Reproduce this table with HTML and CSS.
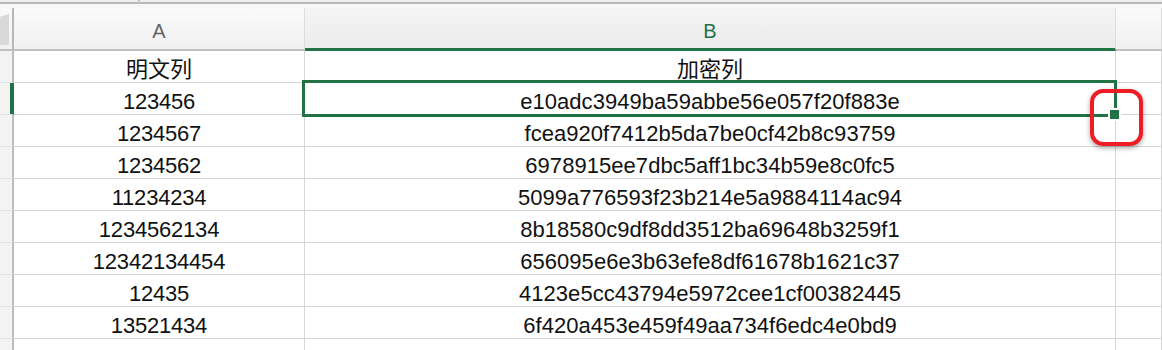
FILE: index.html
```html
<!DOCTYPE html>
<html lang="zh">
<head>
<meta charset="utf-8">
<title>Sheet</title>
<link rel="stylesheet" href="styles.css">
</head>
<body>
<div class="app">
  <div class="topbar"><span class="tb-sep"></span></div>
  <div class="sheet">
    <div class="cell corner"><span class="corner-tri"></span></div>
    <div class="cell colhead">A</div>
    <div class="cell colhead sel">B</div>
    <div class="cell colhead"></div>

    <div class="cell rowhead"></div>
    <div class="cell data cjk">明文列</div>
    <div class="cell data cjk">加密列</div>
    <div class="cell data"></div>

    <div class="cell rowhead selrow"></div>
    <div class="cell data">123456</div>
    <div class="cell data hex">e10adc3949ba59abbe56e057f20f883e</div>
    <div class="cell data"></div>

    <div class="cell rowhead"></div>
    <div class="cell data">1234567</div>
    <div class="cell data hex">fcea920f7412b5da7be0cf42b8c93759</div>
    <div class="cell data"></div>

    <div class="cell rowhead"></div>
    <div class="cell data">1234562</div>
    <div class="cell data hex">6978915ee7dbc5aff1bc34b59e8c0fc5</div>
    <div class="cell data"></div>

    <div class="cell rowhead"></div>
    <div class="cell data">11234234</div>
    <div class="cell data hex">5099a776593f23b214e5a9884114ac94</div>
    <div class="cell data"></div>

    <div class="cell rowhead"></div>
    <div class="cell data">1234562134</div>
    <div class="cell data hex">8b18580c9df8dd3512ba69648b3259f1</div>
    <div class="cell data"></div>

    <div class="cell rowhead"></div>
    <div class="cell data">12342134454</div>
    <div class="cell data hex">656095e6e3b63efe8df61678b1621c37</div>
    <div class="cell data"></div>

    <div class="cell rowhead"></div>
    <div class="cell data">12435</div>
    <div class="cell data hex">4123e5cc43794e5972cee1cf00382445</div>
    <div class="cell data"></div>

    <div class="cell rowhead"></div>
    <div class="cell data">13521434</div>
    <div class="cell data hex">6f420a453e459f49aa734f6edc4e0bd9</div>
    <div class="cell data"></div>

    <div class="cell rowhead"></div>
    <div class="cell data"></div>
    <div class="cell data"></div>
    <div class="cell data"></div>
  </div>
  <div class="selection"></div>
  <div class="handle"></div>
  <div class="annot"></div>
</div>
</body>
</html>
```

FILE: styles.css
```css
html, body {
  margin: 0;
  padding: 0;
  background: #ffffff;
}
body {
  width: 1162px;
  height: 350px;
  overflow: hidden;
  font-family: "Liberation Sans", "Noto Sans CJK SC", sans-serif;
}
.app {
  position: relative;
  width: 1162px;
  height: 350px;
  overflow: hidden;
}
.topbar {
  height: 8px;
  box-sizing: border-box;
  background: #f7f7f7;
  border-top: 2px solid #eeeeee;
  position: relative;
}
.topbar::before {
  content: "";
  display: block;
  height: 2px;
  background: #b9b9b9;
}
.tb-sep {
  position: absolute;
  left: 138px;
  top: -2px;
  width: 2px;
  height: 3px;
  background: #c6c6c6;
}
.sheet {
  display: grid;
  grid-template-columns: 14px 291px 811px 1fr;
  grid-template-rows: 43px repeat(10, 32px);
}
.cell {
  box-sizing: border-box;
  border-right: 1px solid #d6d6d6;
  border-bottom: 1px solid #d4d4d4;
  display: flex;
  align-items: flex-end;
  justify-content: center;
  white-space: nowrap;
}
.corner {
  background: linear-gradient(#fafafa, #f1f1f1);
  border-right: 2px solid #b7b7b7;
  border-bottom: 2px solid #c0c0c0;
  align-items: stretch;
  justify-content: flex-start;
  padding-top: 6px;
  padding-bottom: 4px;
}
.corner-tri {
  display: block;
  width: 9px;
  background: #d9d9d9;
  clip-path: polygon(100% 0, 100% 100%, 0 100%, 0 9%);
}
.colhead {
  background: linear-gradient(#fafafa, #f1f1f1);
  border-bottom: 2px solid #c0c0c0;
  border-right: 1px solid #dcdcdc;
  color: #666666;
  font-size: 20px;
  line-height: 20px;
  padding-bottom: 8px;
}
.colhead.sel {
  color: #217346;
  background: linear-gradient(#f4f4f4, #ececec);
  border-bottom: 3px solid #217346;
  padding-bottom: 7px;
}
.rowhead {
  background: #f3f3f3;
  border-right: 2px solid #bdbdbd;
  border-bottom: 1px solid #e2e2e2;
}
.rowhead.selrow {
  border-right-color: #217346;
  box-shadow: inset -2px 0 0 #217346;
}
.data {
  color: #111111;
  font-size: 22px;
  line-height: 22px;
  letter-spacing: -0.2px;
  padding-bottom: 1px;
}
.data.hex {
  letter-spacing: 0.05px;
}
.data.cjk {
  letter-spacing: 0;
  font-size: 22px;
}
.selection {
  position: absolute;
  left: 302px;
  top: 80px;
  width: 815px;
  height: 37px;
  box-sizing: border-box;
  border: 3px solid #217346;
}
.handle {
  position: absolute;
  left: 1108px;
  top: 108px;
  width: 9px;
  height: 9px;
  border: 2px solid #ffffff;
  background: #217346;
}
.annot {
  position: absolute;
  left: 1090px;
  top: 89px;
  width: 53px;
  height: 57px;
  box-sizing: border-box;
  border: 4px solid #ee1c25;
  border-radius: 13px;
  box-shadow: 0 2px 5px rgba(0, 0, 0, 0.35);
}
```
